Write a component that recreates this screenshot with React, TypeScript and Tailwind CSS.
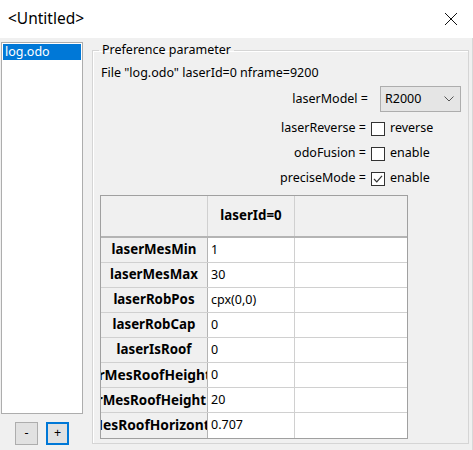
import React from "react";

const rows: { label: string; value: string; cls: string }[] = [
  { label: "laserMesMin", value: "1", cls: "justify-center" },
  { label: "laserMesMax", value: "30", cls: "justify-center" },
  { label: "laserRobPos", value: "cpx(0,0)", cls: "justify-center" },
  { label: "laserRobCap", value: "0", cls: "justify-center" },
  { label: "laserIsRoof", value: "0", cls: "justify-center" },
  { label: "laserMesRoofHeight", value: "0", cls: "justify-end mr-[-4px] text-[13.8px]" },
  { label: "laserMesRoofHeight", value: "20", cls: "justify-end pr-[1px] text-[13.4px]" },
  { label: "laserMesRoofHorizontal", value: "0.707", cls: "justify-end mr-[-15px] text-[13.8px]" },
];

function Check({ checked }: { checked?: boolean }) {
  return (
    <div className="w-[14px] h-[14px] border border-[#333333] bg-white flex items-center justify-center">
      {checked && (
        <svg width="12" height="12" viewBox="0 0 12 12">
          <path d="M2 6 L4.8 8.8 L10 2.8" fill="none" stroke="#333" strokeWidth="1.2" />
        </svg>
      )}
    </div>
  );
}

export default function App() {
  return (
    <div
      className="w-[473px] h-[450px] bg-[#f0f0f0] text-[12.5px] text-black overflow-hidden flex flex-col"
      style={{ fontFamily: '"Noto Sans", "Segoe UI", sans-serif' }}
    >
      {/* title bar */}
      <div className="h-[38px] bg-white flex items-center justify-between pl-[8px] pr-[15px] shrink-0">
        <span className="text-[15.5px] leading-none">&lt;Untitled&gt;</span>
        <svg width="14" height="14" viewBox="0 0 14 14">
          <path d="M1 1 L13 13 M13 1 L1 13" stroke="#111" strokeWidth="1" />
        </svg>
      </div>
      <div className="flex flex-1 pt-[4px] border-r border-[#d8d8d8]">
        {/* left column */}
        <div className="flex flex-col w-[84px] pl-[1px]">
          <div className="h-[372px] w-[82px] border border-[#adadad] bg-white p-[1px]">
            <div className="bg-[#0078d7] text-white h-[16px] leading-[16px] pl-[2px]">log.odo</div>
          </div>
          <div className="flex gap-[8px] pl-[14px] mt-[8px]">
            <div className="w-[23px] h-[23px] bg-[#e1e1e1] border border-[#adadad] flex items-center justify-center leading-none">-</div>
            <div className="w-[23px] h-[23px] bg-[#e1e1e1] border-2 border-[#0078d7] flex items-center justify-center leading-none">+</div>
          </div>
        </div>
        {/* group box */}
        <fieldset className="ml-[8px] w-[377px] h-[402px] border border-[#d5d5d5] shadow-[inset_1px_1px_0_white]">
          <legend className="ml-[6px] px-[3px] leading-[16px]">Preference parameter</legend>
          <div className="pl-[8px] mt-[7px] leading-[16px]">File "log.odo" laserId=0 nframe=9200</div>
          <div className="flex items-center mt-[5px] h-[26px]">
            <div className="w-[275px] text-right">laserModel =</div>
            <div className="ml-[12px] w-[81px] h-[26px] bg-[#e5e5e5] border border-[#adadad] flex items-center justify-between pl-[4px] pr-[6px]">
              <span>R2000</span>
              <svg width="10" height="6" viewBox="0 0 10 6">
                <path d="M0.5 0.5 L5 5 L9.5 0.5" fill="none" stroke="#555" strokeWidth="1" />
              </svg>
            </div>
          </div>
          <div className="mt-[4px]">
            {[
              ["laserReverse =", "reverse", false],
              ["odoFusion =", "enable", false],
              ["preciseMode =", "enable", true],
            ].map(([l, t, c]) => (
              <div key={l as string} className="flex items-center h-[25px]">
                <div className="w-[273px] text-right">{l as string}</div>
                <div className="ml-[5px]">
                  <Check checked={c as boolean} />
                </div>
                <span className="ml-[5px]">{t as string}</span>
              </div>
            ))}
          </div>
          {/* table */}
          <div className="ml-[7px] mt-[4px] w-[308px] border border-[#a0a0a0] bg-white">
            <div className="flex h-[42px] bg-[#f0f0f0] border-b-2 border-[#b4b4b4]">
              <div className="w-[107px] border-r border-[#d0d0d0]" />
              <div className="w-[87px] border-r border-[#d0d0d0] flex items-center justify-center font-bold text-[13.3px]">laserId=0</div>
              <div className="flex-1" />
            </div>
            {rows.map((r, i) => (
              <div key={i} className={"flex h-[25px] " + (i < rows.length - 1 ? "border-b border-[#d0d0d0]" : "")}>
                <div className="w-[107px] bg-[#f0f0f0] border-r border-[#b4b4b4] overflow-hidden">
                  <div className={"h-full flex items-center font-bold whitespace-nowrap text-[13.3px] " + r.cls}>
                    <span className="shrink-0">{r.label}</span>
                  </div>
                </div>
                <div className="w-[87px] border-r border-[#d0d0d0] flex items-center pl-[3px]">{r.value}</div>
                <div className="flex-1" />
              </div>
            ))}
          </div>
        </fieldset>
      </div>
    </div>
  );
}
